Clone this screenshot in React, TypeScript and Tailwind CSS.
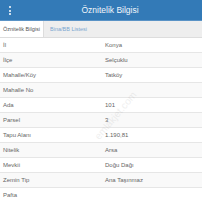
import React from 'react'

const ROWS: [string, string][] = [
  ['İl', 'Konya'],
  ['İlçe', 'Selçuklu'],
  ['Mahalle/Köy', 'Tatköy'],
  ['Mahalle No', ''],
  ['Ada', '101'],
  ['Parsel', '3'],
  ['Tapu Alanı', '1.190,81'],
  ['Nitelik', 'Arsa'],
  ['Mevkii', 'Doğu Dağı'],
  ['Zemin Tip', 'Ana Taşınmaz'],
  ['Pafta', ''],
]

export default function App() {
  return (
    <div className="relative w-[202px] h-[202px] overflow-hidden bg-white" style={{ fontFamily: '"Liberation Sans", Arial, sans-serif' }}>
      {/* Header */}
      <div className="h-[21px] bg-[#337ab7] flex items-center relative border-b border-[#5a93c6]">
        <div className="absolute left-[9px] top-[6px] flex flex-col gap-[1.5px]">
          <span className="block w-[2px] h-[2px] bg-white rounded-full" />
          <span className="block w-[2px] h-[2px] bg-white rounded-full" />
          <span className="block w-[2px] h-[2px] bg-white rounded-full" />
        </div>
        <div className="flex-1 text-center text-[#f2f6fb] text-[8.5px] pl-[18px]">Öznitelik Bilgisi</div>
      </div>

      {/* Tabs */}
      <div className="h-[17px] bg-[#eeeeee] flex items-end pt-[1px] border-b border-[#dddddd]">
        <div className="h-[16px] w-[44px] bg-white border-r border-[#dddddd] text-[5.5px] text-[#555] flex items-center justify-center">
          Öznitelik Bilgisi
        </div>
        <div className="h-[16px] px-[6px] text-[5.5px] text-[#7aa6d0] flex items-center">Bina/BB Listesi</div>
      </div>

      {/* Table */}
      <div className="flex flex-col">
        {ROWS.map(([k, v], i) => (
          <div
            key={k}
            className={`h-[15px] flex items-center border-b border-[#e6e6e6] text-[6px] text-[#666] ${i % 2 === 1 ? 'bg-[#f9f9f9]' : 'bg-white'}`}
          >
            <div className="w-[101px] pl-[3px]">{k}</div>
            <div className="flex-1 pl-[4px]">{v}</div>
          </div>
        ))}
      </div>

      <div className="absolute left-[86px] top-[108px] -rotate-[50deg] text-[10px] text-[#999] opacity-15 pointer-events-none">
        emlakjet.com
      </div>
    </div>
  )
}
